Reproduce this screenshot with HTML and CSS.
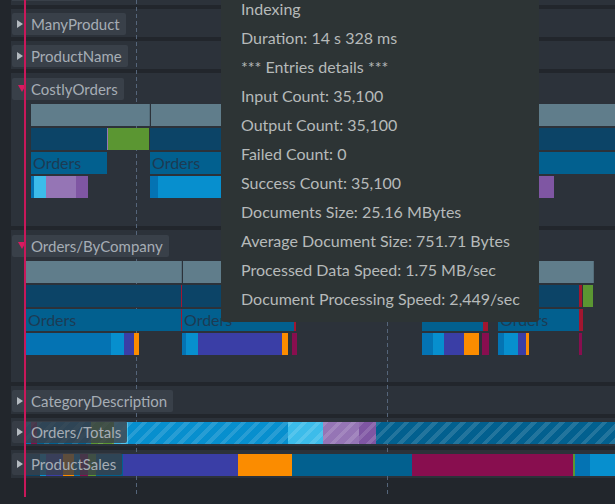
FILE: index.html
```html
<!DOCTYPE html>
<html lang="en">
<head>
    <meta charset="UTF-8">
    <meta name="viewport" content="width=device-width, initial-scale=1.0">
    <title>Indexing Performance</title>
    <link rel="stylesheet" href="styles.css">
</head>
<body>
    <div class="timeline">
        <div class="guide" style="left: 136px"></div>
        <div class="guide" style="left: 387px"></div>
        <div class="cursor"></div>

        <div class="row stub">
            <div class="label-stub"></div>
        </div>

        <div class="row">
            <div class="label"><span class="caret"></span>ManyProduct</div>
        </div>

        <div class="row">
            <div class="label"><span class="caret"></span>ProductName</div>
        </div>

        <div class="row expanded">
            <div class="label"><span class="caret open"></span>CostlyOrders</div>
            <div class="lanes">
                <div class="lane">
                    <div class="seg slate" style="left: 19px; width: 119px"></div>
                    <div class="seg slate" style="left: 139px; width: 465px"></div>
                </div>
                <div class="lane">
                    <div class="seg navy" style="left: 19px; width: 76px"></div>
                    <div class="seg purple" style="left: 95px; width: 1px"></div>
                    <div class="seg green" style="left: 96px; width: 41px"></div>
                    <div class="seg navy" style="left: 138px; width: 466px"></div>
                </div>
                <div class="lane">
                    <div class="seg blue" style="left: 19px; width: 76px">Orders</div>
                    <div class="seg blue" style="left: 138px; width: 466px">Orders</div>
                </div>
                <div class="lane">
                    <div class="seg mid" style="left: 19px; width: 3px"></div>
                    <div class="seg cyan" style="left: 22px; width: 12px"></div>
                    <div class="seg purple" style="left: 34px; width: 30px"></div>
                    <div class="seg plum" style="left: 64px; width: 12px"></div>
                    <div class="seg mid" style="left: 138px; width: 8px"></div>
                    <div class="seg sky" style="left: 146px; width: 200px"></div>
                    <div class="seg plum" style="left: 509px; width: 33px"></div>
                </div>
            </div>
        </div>

        <div class="row expanded">
            <div class="label"><span class="caret open"></span>Orders/ByCompany</div>
            <div class="lanes">
                <div class="lane">
                    <div class="seg slate" style="left: 14px; width: 156px"></div>
                    <div class="seg slate" style="left: 171px; width: 411px"></div>
                </div>
                <div class="lane">
                    <div class="seg navy" style="left: 14px; width: 155px"></div>
                    <div class="seg red" style="left: 169px; width: 1px"></div>
                    <div class="seg navy" style="left: 170px; width: 397px"></div>
                    <div class="seg red" style="left: 567px; width: 3px"></div>
                    <div class="seg green" style="left: 571px; width: 10px"></div>
                </div>
                <div class="lane">
                    <div class="seg blue" style="left: 14px; width: 155px">Orders</div>
                    <div class="seg red" style="left: 169px; width: 1px"></div>
                    <div class="seg blue" style="left: 170px; width: 112px">Orders</div>
                    <div class="seg red" style="left: 282px; width: 2px"></div>
                    <div class="seg blue" style="left: 410px; width: 61px"></div>
                    <div class="seg red" style="left: 471px; width: 5px"></div>
                    <div class="seg blue" style="left: 486px; width: 81px">Orders</div>
                    <div class="seg red" style="left: 567px; width: 4px"></div>
                </div>
                <div class="lane">
                    <div class="seg mid" style="left: 14px; width: 85px"></div>
                    <div class="seg sky" style="left: 99px; width: 13px"></div>
                    <div class="seg indigo" style="left: 112px; width: 10px"></div>
                    <div class="seg orange" style="left: 122px; width: 5px"></div>
                    <div class="seg mid" style="left: 170px; width: 4px"></div>
                    <div class="seg sky" style="left: 174px; width: 12px"></div>
                    <div class="seg indigo" style="left: 186px; width: 84px"></div>
                    <div class="seg orange" style="left: 270px; width: 6px"></div>
                    <div class="seg maroon" style="left: 280px; width: 5px"></div>
                    <div class="seg mid" style="left: 410px; width: 11px"></div>
                    <div class="seg sky" style="left: 421px; width: 11px"></div>
                    <div class="seg indigo" style="left: 432px; width: 20px"></div>
                    <div class="seg orange" style="left: 452px; width: 15px"></div>
                    <div class="seg maroon" style="left: 470px; width: 7px"></div>
                    <div class="seg mid" style="left: 486px; width: 6px"></div>
                    <div class="seg sky" style="left: 492px; width: 14px"></div>
                    <div class="seg indigo" style="left: 506px; width: 8px"></div>
                    <div class="seg orange" style="left: 514px; width: 3px"></div>
                    <div class="seg maroon" style="left: 567px; width: 3px"></div>
                </div>
            </div>
        </div>

        <div class="row">
            <div class="label"><span class="caret"></span>CategoryDescription</div>
        </div>

        <div class="row stacked">
            <div class="lane striped">
                <div class="seg mid" style="left: 14px; width: 5px"></div>
                <div class="seg maroon" style="left: 19px; width: 6px"></div>
                <div class="seg blue" style="left: 25px; width: 54px"></div>
                <div class="seg green" style="left: 79px; width: 23px"></div>
                <div class="seg cyan" style="left: 102px; width: 14px"></div>
                <div class="seg sky" style="left: 116px; width: 160px"></div>
                <div class="seg cyan" style="left: 276px; width: 35px"></div>
                <div class="seg purple" style="left: 311px; width: 36px"></div>
                <div class="seg plum" style="left: 347px; width: 17px"></div>
                <div class="seg blue" style="left: 364px; width: 240px"></div>
            </div>
            <div class="label overlay"><span class="caret"></span>Orders/Totals</div>
        </div>

        <div class="row stacked">
            <div class="lane">
                <div class="seg navy" style="left: 14px; width: 14px"></div>
                <div class="seg sky" style="left: 28px; width: 6px"></div>
                <div class="seg indigo" style="left: 34px; width: 17px"></div>
                <div class="seg orange" style="left: 51px; width: 11px"></div>
                <div class="seg mid" style="left: 62px; width: 6px"></div>
                <div class="seg maroon" style="left: 68px; width: 8px"></div>
                <div class="seg green" style="left: 76px; width: 8px"></div>
                <div class="seg blue" style="left: 84px; width: 27px"></div>
                <div class="seg indigo" style="left: 111px; width: 115px"></div>
                <div class="seg orange" style="left: 226px; width: 54px"></div>
                <div class="seg blue" style="left: 280px; width: 120px"></div>
                <div class="seg maroon" style="left: 400px; width: 161px"></div>
                <div class="seg green" style="left: 561px; width: 2px"></div>
                <div class="seg mid" style="left: 563px; width: 15px"></div>
                <div class="seg sky" style="left: 578px; width: 26px"></div>
            </div>
            <div class="label overlay"><span class="caret"></span>ProductSales</div>
        </div>

        <div class="tooltip">
            <div>Indexing</div>
            <div>Duration: 14 s 328 ms</div>
            <div>*** Entries details ***</div>
            <div>Input Count: 35,100</div>
            <div>Output Count: 35,100</div>
            <div>Failed Count: 0</div>
            <div>Success Count: 35,100</div>
            <div>Documents Size: 25.16 MBytes</div>
            <div>Average Document Size: 751.71 Bytes</div>
            <div>Processed Data Speed: 1.75 MB/sec</div>
            <div>Document Processing Speed: 2,449/sec</div>
        </div>
    </div>
</body>
</html>
```

FILE: styles.css
```css
body {
    margin: 0;
    background-color: #22262c;
    font-family: "Lato", "Open Sans", sans-serif;
    overflow: hidden;
}
.timeline {
    position: relative;
    width: 615px;
    height: 504px;
    padding-left: 11px;
    box-sizing: border-box;
}
.row {
    height: 28px;
    margin-bottom: 4px;
    padding: 3px 0 0 1px;
    box-sizing: border-box;
    background-color: #2c323a;
}
.row.stub {
    height: 5px;
    padding-top: 0;
}
.label-stub {
    width: 68px;
    height: 1px;
    background-color: #394049;
}
.row.expanded {
    height: 153px;
}
.row.expanded + .row.expanded {
    height: 152px;
}
.label {
    position: relative;
    z-index: 3;
    display: inline-flex;
    align-items: center;
    height: 22px;
    padding: 0 6px 0 5px;
    background-color: #394049;
    border-radius: 2px;
    color: #a6adb5;
    font-size: 15px;
    line-height: 20px;
}
.label.overlay {
    background-color: rgba(57, 64, 73, 0.82);
}
.caret {
    width: 14px;
    height: 22px;
    display: flex;
    align-items: center;
}
.caret::before {
    content: "";
    border-left: 6px solid #b4bac0;
    border-top: 4px solid transparent;
    border-bottom: 4px solid transparent;
}
.caret.open::before {
    margin-left: 1px;
    border-top: 7px solid #d81b60;
    border-left: 4px solid transparent;
    border-right: 4px solid transparent;
    border-bottom: 0;
}
.lanes {
    display: flex;
    flex-direction: column;
    gap: 2px;
    margin-top: 4px;
}
.lane {
    position: relative;
    z-index: 2;
    height: 22px;
}
.seg {
    position: absolute;
    top: 0;
    bottom: 0;
    box-sizing: border-box;
    padding-left: 2px;
    overflow: hidden;
    white-space: nowrap;
    color: #1c3b54;
    font-size: 16px;
    line-height: 22px;
}
.stacked {
    display: grid;
}
.stacked > .lane, .stacked > .label {
    grid-area: 1 / 1;
}
.stacked > .lane {
    margin-top: 1px;
}
.stacked > .label {
    justify-self: start;
}
.striped .seg {
    background-image: repeating-linear-gradient(135deg, rgba(255, 255, 255, 0.13) 0 4px, transparent 4px 10px);
}
.slate { background-color: #607d8b; box-shadow: inset -1px 0 rgba(0, 0, 0, 0.12); }
.navy { background-color: #0c4467; }
.blue { background-color: #02608f; }
.mid { background-color: #0473b3; }
.sky { background-color: #078fce; }
.cyan { background-color: #3cbcea; }
.purple { background-color: #9575b5; }
.plum { background-color: #7f56a3; }
.green { background-color: #5b9632; }
.indigo { background-color: #3a3ea6; }
.orange { background-color: #fb8c00; }
.maroon { background-color: #880e4f; }
.red { background-color: #a3162f; }
.guide {
    position: absolute;
    z-index: 1;
    top: 0;
    width: 1px;
    height: 497px;
    background-image: repeating-linear-gradient(to bottom, #55657a 0 4px, transparent 4px 7px);
}
.cursor {
    position: absolute;
    z-index: 4;
    top: 0;
    left: 24px;
    width: 2px;
    height: 497px;
    background-color: #c8185a;
}
.tooltip {
    position: absolute;
    z-index: 5;
    top: -6px;
    left: 221px;
    width: 318px;
    padding: 0 20px 9px;
    box-sizing: border-box;
    background-color: #2d3435;
    border-radius: 0 0 4px 4px;
    color: #b6baba;
    font-size: 16px;
    line-height: 29px;
    white-space: nowrap;
}
```
